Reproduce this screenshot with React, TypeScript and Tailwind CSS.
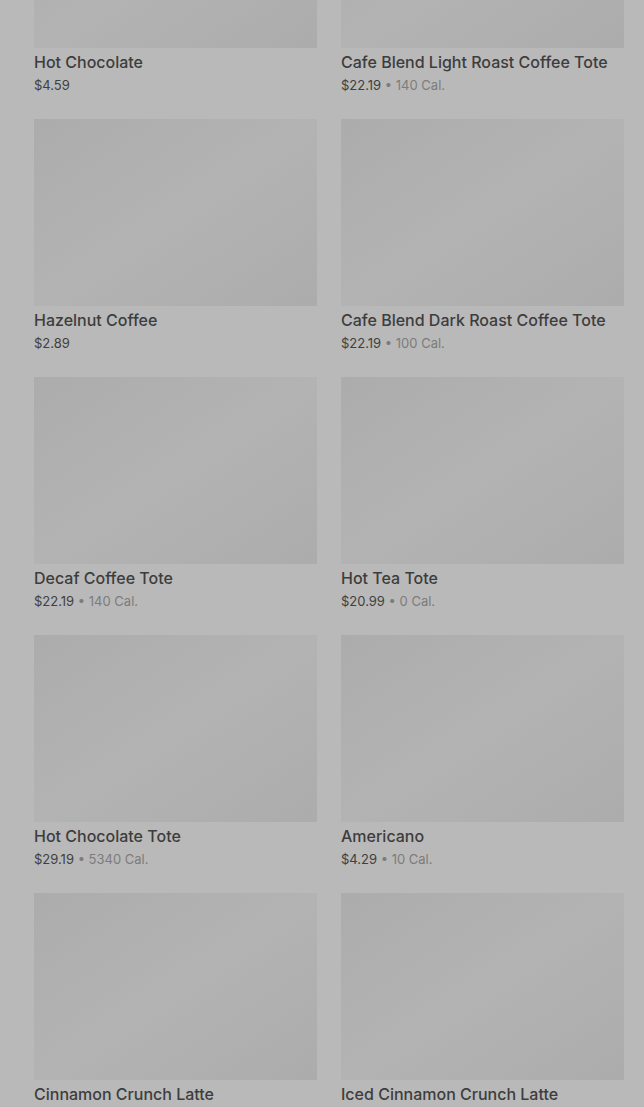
type Item = {
  name: string;
  price: string;
  cal?: string;
};

const items: Item[] = [
  { name: "Hot Chocolate", price: "$4.59" },
  { name: "Cafe Blend Light Roast Coffee Tote", price: "$22.19", cal: "140 Cal." },
  { name: "Hazelnut Coffee", price: "$2.89" },
  { name: "Cafe Blend Dark Roast Coffee Tote", price: "$22.19", cal: "100 Cal." },
  { name: "Decaf Coffee Tote", price: "$22.19", cal: "140 Cal." },
  { name: "Hot Tea Tote", price: "$20.99", cal: "0 Cal." },
  { name: "Hot Chocolate Tote", price: "$29.19", cal: "5340 Cal." },
  { name: "Americano", price: "$4.29", cal: "10 Cal." },
  { name: "Cinnamon Crunch Latte", price: "$5.29", cal: "380 Cal." },
  { name: "Iced Cinnamon Crunch Latte", price: "$5.49", cal: "340 Cal." },
];

function ProductCard({ item }: { item: Item }) {
  return (
    <div className="flex flex-col">
      {/* image placeholder */}
      <div className="h-[187px] w-full bg-gradient-to-br from-[#acacac] via-[#b3b3b3] to-[#acacac]" />

      <div className="mt-[2px] text-[16px] leading-6 font-medium text-[#3d3d3d] truncate">
        {item.name}
      </div>
      <div className="mt-[1px] text-[13px] leading-5 text-[#404040]">
        {item.price}
        {item.cal && (
          <span className="text-[#7c7c7c]"> • {item.cal}</span>
        )}
      </div>
    </div>
  );
}

export default function App() {
  return (
    <div
      className="h-screen overflow-hidden bg-[#b9b9b9]"
      style={{ fontFamily: "Inter, 'Noto Sans', sans-serif" }}
    >
      {/* scrolled list */}
      <div className="-mt-[139px] pl-[34px] pr-[20px] grid grid-cols-2 gap-x-[24px] gap-y-[24px]">
        {items.map((item) => (
          <ProductCard key={item.name} item={item} />
        ))}
      </div>
    </div>
  );
}
